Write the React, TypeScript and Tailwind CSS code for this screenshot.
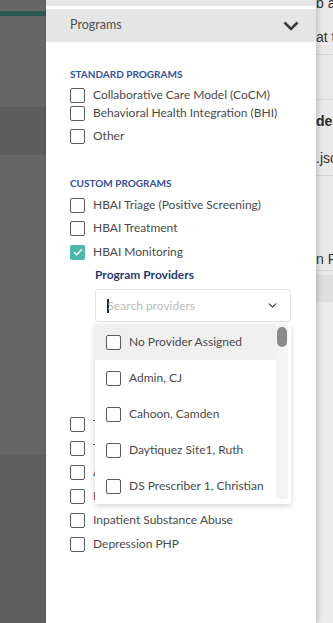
import { ChevronDown } from 'lucide-react';

type Row = { label: string; checked?: boolean };

const standard: Row[] = [
  { label: 'Collaborative Care Model (CoCM)' },
  { label: 'Behavioral Health Integration (BHI)' },
  { label: 'Other' },
];

const providers = [
  'No Provider Assigned',
  'Admin, CJ',
  'Cahoon, Camden',
  'Daytiquez Site1, Ruth',
  'DS Prescriber 1, Christian',
];

const moreCustom = [
  'Transitional Care',
  'Telepsychiatry',
  'Anxiety Program',
  'Intensive Outpatient',
  'Inpatient Substance Abuse',
  'Depression PHP',
];

function Box({ checked }: { checked?: boolean }) {
  if (checked) {
    return (
      <span className="flex h-[15px] w-[15px] shrink-0 items-center justify-center rounded-[2px] bg-[#4db6a9]">
        <svg width="10" height="8" viewBox="0 0 10 8" fill="none">
          <path d="M1 4.2 L3.7 6.8 L9 1.2" stroke="white" strokeWidth="1.3" />
        </svg>
      </span>
    );
  }
  return <span className="h-[15px] w-[15px] shrink-0 rounded-[2px] border border-[#5a5a5a] bg-white" />;
}

function CheckRow({ label, checked, className = '' }: Row & { className?: string }) {
  return (
    <div className={`flex h-[18px] items-center gap-[8px] whitespace-nowrap text-[12px] text-[#4a4a4a] ${className}`}>
      <Box checked={checked} />
      <span>{label}</span>
    </div>
  );
}

export default function App() {
  return (
    <div className="flex h-[623px] w-[333px] overflow-hidden bg-white font-['Lato','Liberation_Sans',sans-serif]">
      {/* dimmed page on the left */}
      <div className="flex w-[46px] shrink-0 flex-col bg-[#666666]">
        <div className="h-[11px]" />
        <div className="h-[5px] bg-[#2b574f]" />
        <div className="h-[91px]" />
        <div className="h-[48px] bg-[#5d5d5d]" />
        <div className="flex-1" />
        <div className="h-[168px] bg-[#5f5f5f]" />
      </div>

      {/* side panel */}
      <div className="relative z-10 flex w-[270px] shrink-0 flex-col bg-white shadow-[2px_0_5px_rgba(0,0,0,0.18)]">
        <div className="h-[6px] bg-[#e6e6e6]" />
        <div className="h-[3px]" />
        <div className="flex h-[33px] items-center justify-between bg-[#e5e5e5] pl-[24px] pr-[17px]">
          <span className="text-[12.5px] text-[#505050]">Programs</span>
          <svg width="16" height="10" viewBox="0 0 16 10" fill="none">
            <path d="M1.5 1.5 L8 8 L14.5 1.5" stroke="#3a3a3a" strokeWidth="2.6" />
          </svg>
        </div>

        <div className="flex flex-col pl-[24px]">
          <h3 className="mt-[26px] text-[10px] font-bold leading-[12px] text-[#34509a]">STANDARD PROGRAMS</h3>
          <CheckRow {...standard[0]} className="mt-[6px]" />
          <CheckRow {...standard[1]} />
          <CheckRow {...standard[2]} className="mt-[5px]" />

          <h3 className="mt-[32px] text-[10px] font-bold leading-[12px] text-[#34509a]">CUSTOM PROGRAMS</h3>
          <CheckRow label="HBAI Triage (Positive Screening)" className="mt-[7px]" />
          <CheckRow label="HBAI Treatment" className="mt-[5px]" />
          <CheckRow label="HBAI Monitoring" checked className="mt-[6px]" />

          <div className="ml-[25px] mt-[6px] text-[12px] font-bold leading-[16px] text-[#1f3a6c]">Program Providers</div>

          <div className="relative z-20 ml-[25px] mt-[6px] w-[196px]">
            <div className="flex h-[33px] items-center justify-between rounded-[3px] border border-[#e3e3e3] bg-white pl-[11px] pr-[11px]">
              <span className="flex items-center text-[12px] text-[#b9b9b9]">
                <span className="-mr-[1px] h-[14px] w-[1.5px] bg-[#222]" />
                Search providers
              </span>
              <ChevronDown size={13} strokeWidth={2.4} className="text-[#444]" />
            </div>

            <div className="absolute left-0 top-full mt-[2px] flex h-[180px] w-[196px] rounded-b-[3px] bg-white shadow-[0_2px_6px_rgba(0,0,0,0.18)]">
              <div className="flex flex-1 flex-col">
                {providers.map((p, i) => (
                  <div
                    key={p}
                    className={`flex h-[36px] shrink-0 items-center gap-[8px] pl-[11px] text-[12px] text-[#4a4a4a] ${
                      i === 0 ? 'bg-[#efefef]' : ''
                    }`}
                  >
                    <span className="h-[15px] w-[15px] shrink-0 rounded-[2px] border border-[#5a5a5a] bg-white" />
                    <span className="whitespace-nowrap">{p}</span>
                  </div>
                ))}
              </div>
              <div className="mb-[5px] mr-[3px] w-[12px] rounded-b-[4px] bg-[#f3f3f3] pt-[3px]">
                <div className="mx-auto h-[20px] w-[10px] rounded-[5px] bg-[#8a8a8a]" />
              </div>
            </div>
          </div>

          <div className="mt-[93px] flex flex-col gap-[6px]">
            {moreCustom.map((c) => (
              <CheckRow key={c} label={c} />
            ))}
          </div>
        </div>
      </div>

      {/* page content peeking on the right */}
      <div className="flex flex-1 flex-col overflow-hidden bg-[#e9e9e9] font-['Liberation_Sans',sans-serif] text-[14px] text-[#333]">
        <div className="-mt-[7px] h-[20px] whitespace-nowrap leading-[20px]">b a</div>
        <div className="mt-[15px] whitespace-nowrap leading-[18px]">at t</div>
        <div className="mt-[8px] h-px bg-[#d6d6d6]" />
        <div className="mt-[44px] h-px bg-[#d6d6d6]" />
        <div className="mt-[12px] whitespace-nowrap font-bold leading-[18px] text-[#2a2a2a]">der</div>
        <div className="mt-[19px] whitespace-nowrap leading-[18px]">.jsc</div>
        <div className="mt-[8px] h-px bg-[#d6d6d6]" />
        <div className="mt-[74px] whitespace-nowrap leading-[18px]">n R</div>
        <div className="mt-[2px] h-px bg-[#d6d6d6]" />
        <div className="mt-[4px] h-[27px] bg-[#dedede]" />
        <div className="flex-1 bg-[#ebebeb]" />
      </div>
    </div>
  );
}
